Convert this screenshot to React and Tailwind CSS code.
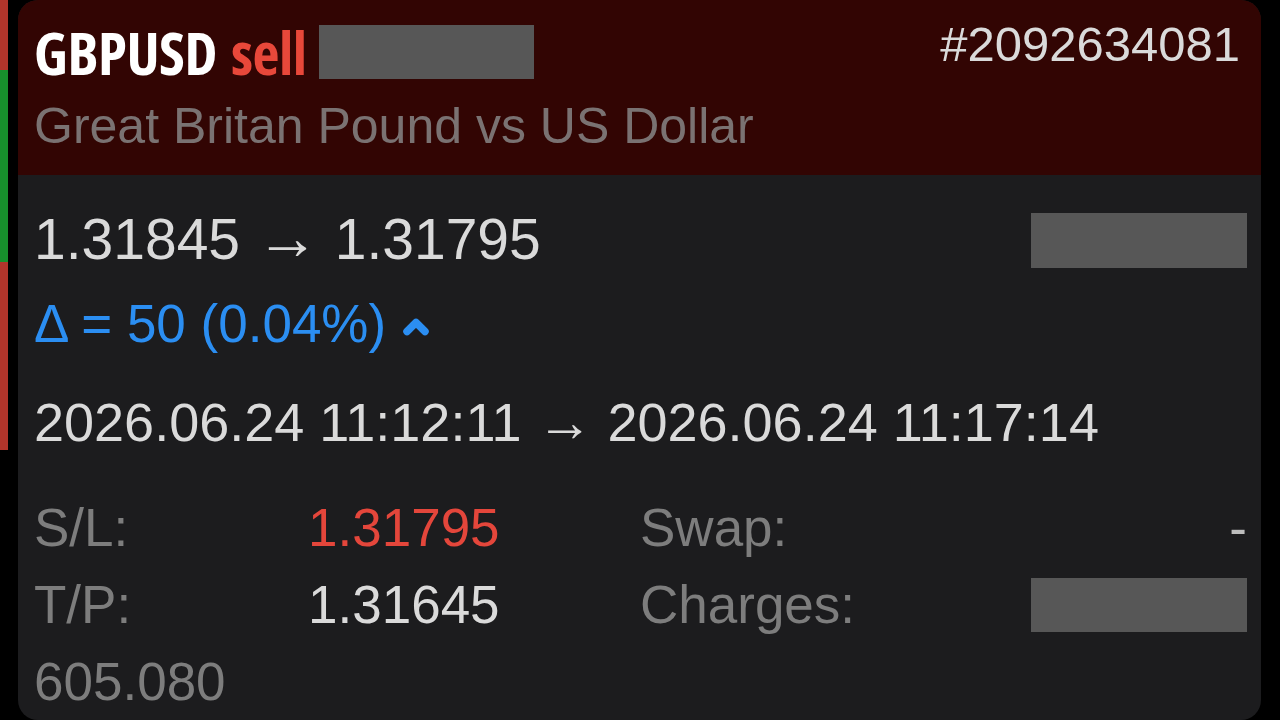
import { ChevronUp } from 'lucide-react';

const sans = { fontFamily: '"Liberation Sans", Arial, sans-serif' };

function Redacted({ className }) {
  return <div className={`bg-[#575757] ${className}`} />;
}

function Arrow({ size }) {
  return <span className={`leading-[0px] ${size}`}>→</span>;
}

export default function App() {
  return (
    <div className="w-[1280px] h-[720px] bg-black flex overflow-hidden" style={sans}>
      {/* side markers */}
      <div className="w-[8px] flex flex-col shrink-0">
        <div className="h-[70px] bg-[#b3352b]" />
        <div className="h-[192px] bg-[#17902c]" />
        <div className="h-[188px] bg-[#b3352b]" />
      </div>

      <div className="ml-[10px] w-[1243px] h-[720px] rounded-[20px] overflow-hidden bg-[#1c1c1e] flex flex-col">
        {/* Header */}
        <div className="h-[175px] shrink-0 bg-[#320503] pl-[16px] pr-[21px] pt-[18px]">
          <div className="flex items-start justify-between">
            <div className="flex items-center gap-[12px]">
              <span
                className="text-[59px] leading-[68px] font-bold text-white font-stretch-condensed tracking-[-0.5px]"
                style={{ fontFamily: '"Open Sans", "DejaVu Sans", sans-serif' }}
              >
                GBPUSD<span className="text-[#e8483a] ml-[14px]">sell</span>
              </span>
              <Redacted className="w-[215px] h-[54px]" />
            </div>
            <span className="text-[49px] leading-[54px] text-[#dadada] mt-[-1px]">#2092634081</span>
          </div>
          <div className="text-[50px] leading-[56px] text-[#7a7272] mt-[12px]">Great Britan Pound vs US Dollar</div>
        </div>

        {/* Body */}
        <div className="flex-1 pl-[16px] pr-[14px] pt-[32px]">
          <div className="flex items-center justify-between">
            <span className="text-[57px] leading-[64px] text-[#dadada]">
              1.31845 <Arrow size="text-[63px]" /> 1.31795
            </span>
            <Redacted className="w-[216px] h-[55px] mt-[2px]" />
          </div>
          <div className="flex items-center text-[#2b8ef2] mt-[21px]">
            <span className="text-[53px] leading-[64px]">Δ = 50 (0.04%)</span>
            <ChevronUp className="w-[36px] h-[36px] ml-[12px] mt-[6px]" strokeWidth={5} />
          </div>
          <div className="text-[54px] leading-[64px] text-[#dadada] mt-[34px]">
            2026.06.24 11:12:11 <Arrow size="text-[56px]" /> 2026.06.24 11:17:14
          </div>

          <div className="grid grid-cols-[274px_332px_1fr_216px] mt-[35px] text-[53px] leading-[77px]">
            <span className="text-[#7d7d7d]">S/L:</span>
            <span className="text-[#e4463b]">1.31795</span>
            <span className="text-[#7d7d7d]">Swap:</span>
            <span className="text-[#bdbdbd] text-right">-</span>

            <span className="text-[#7d7d7d]">T/P:</span>
            <span className="text-[#dadada]">1.31645</span>
            <span className="text-[#7d7d7d]">Charges:</span>
            <div className="flex items-center justify-end">
              <Redacted className="w-[216px] h-[54px]" />
            </div>

            <span className="text-[#7d7d7d]">605.080</span>
          </div>
        </div>
      </div>
    </div>
  );
}
